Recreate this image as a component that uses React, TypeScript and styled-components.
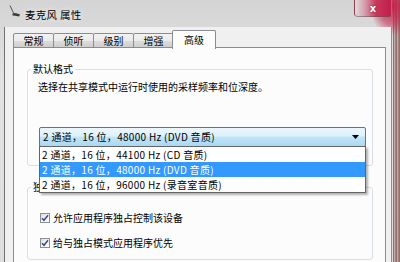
import React from "react";
import styled, { createGlobalStyle } from "styled-components";

const Global = createGlobalStyle`
  html, body { margin: 0; padding: 0; }
  body {
    width: 400px; height: 262px; overflow: hidden;
    font-family: "Noto Sans CJK SC", "Noto Sans", sans-serif;
    font-size: 10px; color: #000;
  }
`;

const Window = styled.div`
  width: 400px; height: 262px; overflow: hidden;
  display: flex; flex-direction: column;
  background:
    radial-gradient(ellipse 22px 30px at 392px 6px, rgba(196, 28, 70, 0.95) 0, rgba(196, 28, 70, 0.55) 60%, rgba(196, 28, 70, 0) 100%),
    repeating-linear-gradient(90deg, #8f7270 0 1px, #c5aaa8 1px 2px, #a4827f 2px 3px) right top / 7px 100% no-repeat,
    linear-gradient(180deg, #d4d4d4 0%, #e2e2e2 30%, #dedede 100%);
`;

const TitleBar = styled.div`
  height: 27px; flex: none;
  display: flex; align-items: flex-start;
  padding-left: 8px;
`;

const AppIcon = styled.svg`
  width: 13px; height: 13px; margin-top: 5px; flex: none;
`;

const Title = styled.span`
  margin-left: 4px; margin-top: 8px;
  font-size: 10.5px; line-height: 13px; letter-spacing: 0.3px;
  text-shadow: 0 0 6px rgba(255,255,255,0.9);
`;

const CloseButton = styled.div`
  margin-left: auto; margin-right: 8px;
  width: 36px; height: 16px; flex: none;
  border: 1px solid rgba(90, 90, 90, 0.55); border-top: none;
  border-radius: 0 0 4px 4px;
  background: linear-gradient(90deg, rgba(230,224,226,0.6) 0%, rgba(214,140,160,0.8) 28%, #c8385c 58%, #c01e48 100%);
  display: flex; align-items: center; justify-content: center;
  color: #fff; font-family: "DejaVu Sans", sans-serif; font-weight: bold; font-size: 10px;
  text-shadow: 0 0 2px rgba(80,0,20,0.8);
`;

const Client = styled.div`
  flex: 1; min-height: 0;
  margin: 0 8px 0 4px;
  border-left: 1px solid #6e7378;
  border-right: 1px solid #8d8d8d;
  background: #f0f0f0;
  padding: 3px 5px 0 8px;
  display: flex; flex-direction: column;
`;

const TabStrip = styled.div`
  display: flex; align-items: flex-end;
  height: 18px; margin-bottom: -1px;
  position: relative; z-index: 1;
`;

const Tab = styled.div<{ $active?: boolean }>`
  box-sizing: border-box;
  display: flex; align-items: center; justify-content: center;
  border: 1px solid #898c95;
  border-radius: 2px 2px 0 0;
  margin-left: ${(p) => (p.$active ? "-2px" : "-1px")};
  width: ${(p) => (p.$active ? "44px" : "41px")};
  height: ${(p) => (p.$active ? "19px" : "15px")};
  align-self: ${(p) => (p.$active ? "flex-start" : "flex-end")};
  background: ${(p) => (p.$active ? "#fcfcfc" : "linear-gradient(180deg, #f2f2f2 0%, #ebebeb 50%, #dddddd 51%, #cfcfcf 100%)")};
  border-bottom: ${(p) => (p.$active ? "none" : "1px solid #898c95")};
  z-index: ${(p) => (p.$active ? 2 : 1)};
  padding-top: ${(p) => (p.$active ? "0" : "1px")};
  line-height: 12px;
  &:first-child { margin-left: 0; }
`;

const Panel = styled.div`
  flex: 1;
  border: 1px solid #898c95;
  background: #fcfcfc;
  padding: 15px 12px 20px 13px;
`;

const Group = styled.fieldset`
  margin: 0; min-width: 0;
  border: 1px solid #d5dfe5;
  border-radius: 3px;
  box-shadow: inset 1px 1px 0 #fff;
  padding: 6px 6px 18px 10px;
  & + & { margin-top: 15px; }
`;

const GroupLabel = styled.legend`
  padding: 0 2px; margin-left: -7px;
  line-height: 12px; font-size: 10px; color: #000;
`;

const Description = styled.div`
  line-height: 12px;
  margin-bottom: 34px;
`;

const ComboWrap = styled.div`
  position: relative;
  margin-left: 1px;
  width: 327px;
`;

const Combo = styled.div`
  box-sizing: border-box;
  height: 20px;
  border: 1px solid #3c7fb1;
  border-radius: 2px;
  background: linear-gradient(180deg, #ecf6fc 0%, #ddf1fb 45%, #c1e4f7 50%, #a9d9f2 100%);
  display: flex; align-items: center;
  padding: 0 6px 0 3px;
  line-height: 12px;
  letter-spacing: 0.3px;
`;

const ComboText = styled.span`
  flex: 1; white-space: nowrap;
`;

const Arrow = styled.svg`
  width: 7px; height: 4px; flex: none;
`;

const DropList = styled.div`
  position: absolute; left: 0; right: 0; top: 19px;
  z-index: 5;
  background: #fff;
  border: 1px solid #646464;
  box-shadow: 2px 2px 2px rgba(0,0,0,0.3);
`;

const Option = styled.div<{ $selected?: boolean }>`
  height: 15px; line-height: 15px;
  padding-left: 2px;
  white-space: nowrap;
  letter-spacing: 0.3px;
  background: ${(p) => (p.$selected ? "#3399ff" : "transparent")};
  color: ${(p) => (p.$selected ? "#fff" : "#000")};
`;

const CheckRow = styled.label`
  display: flex; align-items: center; gap: 3px;
  height: 14px; line-height: 12px;
  padding-left: 2px;
  & + & { margin-top: 11px; }
`;

const CheckGroup = styled(Group)`
  padding-top: 18px; padding-bottom: 9px;
`;

const CheckBox = styled.span`
  box-sizing: border-box;
  width: 10px; height: 10px; flex: none;
  border: 1px solid #8e8f8f;
  background: linear-gradient(135deg, #dcdcdc 0%, #f6f6f6 60%, #ffffff 100%);
  display: flex; align-items: center; justify-content: center;
`;

const Check = () => (
  <svg width="8" height="8" viewBox="0 0 8 8">
    <path d="M1 4.2 L3 6.3 L7 1.2" fill="none" stroke="#3b4c8a" strokeWidth="1.5" />
  </svg>
);

const options = [
  { label: "2 通道，16 位，44100 Hz (CD 音质)" },
  { label: "2 通道，16 位，48000 Hz (DVD 音质)", selected: true },
  { label: "2 通道，16 位，96000 Hz (录音室音质)" },
];

const tabs = ["常规", "侦听", "级别", "增强", "高级"];

export default function App() {
  return (
    <>
      <Global />
      <Window>
        <TitleBar>
          <AppIcon viewBox="0 0 13 13">
            <path d="M2 0.5 L5.5 8" stroke="#555" strokeWidth="1" fill="none" />
            <path d="M4.5 8.5 Q7 7 12 9.5 L11 11.5 Q7 10.5 4.5 10.5 Z" fill="#3a3a3a" />
          </AppIcon>
          <Title>麦克风 属性</Title>
          <CloseButton>x</CloseButton>
        </TitleBar>
        <Client>
          <TabStrip>
            {tabs.map((t, i) => (
              <Tab key={t} $active={i === 4}>{t}</Tab>
            ))}
          </TabStrip>
          <Panel>
            <Group>
              <GroupLabel>默认格式</GroupLabel>
              <Description>选择在共享模式中运行时使用的采样频率和位深度。</Description>
              <ComboWrap>
                <Combo>
                  <ComboText>2 通道，16 位，48000 Hz (DVD 音质)</ComboText>
                  <Arrow viewBox="0 0 7 4">
                    <path d="M0 0 H7 L3.5 4 Z" fill="#000" />
                  </Arrow>
                </Combo>
                <DropList>
                  {options.map((o) => (
                    <Option key={o.label} $selected={o.selected}>{o.label}</Option>
                  ))}
                </DropList>
              </ComboWrap>
            </Group>
            <CheckGroup>
              <GroupLabel>独占模式</GroupLabel>
              <CheckRow>
                <CheckBox><Check /></CheckBox>
                允许应用程序独占控制该设备
              </CheckRow>
              <CheckRow>
                <CheckBox><Check /></CheckBox>
                给与独占模式应用程序优先
              </CheckRow>
            </CheckGroup>
          </Panel>
        </Client>
      </Window>
    </>
  );
}
